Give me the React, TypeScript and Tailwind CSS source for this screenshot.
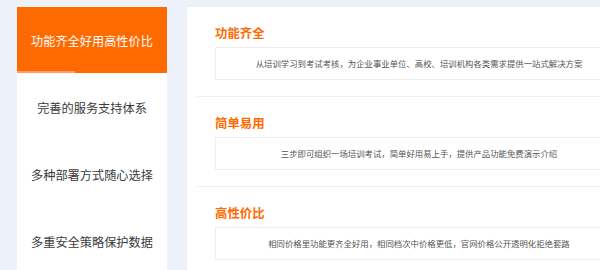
import React from "react";

const tabs = [
  "功能齐全好用高性价比",
  "完善的服务支持体系",
  "多种部署方式随心选择",
  "多重安全策略保护数据",
];

const features = [
  {
    title: "功能齐全",
    desc: "从培训学习到考试考核，为企业事业单位、高校、培训机构各类需求提供一站式解决方案",
  },
  {
    title: "简单易用",
    desc: "三步即可组织一场培训考试，简单好用易上手，提供产品功能免费演示介绍",
  },
  {
    title: "高性价比",
    desc: "相同价格里功能更齐全好用，相同档次中价格更低，官网价格公开透明化拒绝套路",
  },
];

function TabItem({ label, active }: { label: string; active: boolean }) {
  if (active) {
    return (
      <div className="relative h-[66px] bg-[#ff6a00] flex items-center justify-center pt-[3px]">
        <span className="text-[12.2px] text-white">{label}</span>
        <div className="absolute left-0 bottom-0 h-[2px] w-[58px] bg-[#ff9d66]" />
      </div>
    );
  }
  return (
    <div className="h-[67px] flex items-center justify-center pt-[3px]">
      <span className="text-[12.2px] text-[#3a3a3a]">{label}</span>
    </div>
  );
}

function Feature({ title, desc }: { title: string; desc: string }) {
  return (
    <div className="pt-[19px] pb-[16px] pl-[18px] border-b border-[#f0f0f0]">
      <h3 className="text-[12.4px] leading-[14px] font-bold text-[#ff6a00]">{title}</h3>
      <div className="mt-[7px] h-[33px] w-[408px] border border-[#eeeeee] flex items-center justify-center">
        <p className="text-[8.4px] text-[#555]">{desc}</p>
      </div>
    </div>
  );
}

export default function App() {
  return (
    <div
      className="w-[600px] h-[270px] overflow-hidden bg-[#edf1f9] flex gap-[20px] pl-[17px] pt-[7px]"
      style={{ fontFamily: '"Noto Sans CJK SC", "Noto Sans", sans-serif' }}
    >
      <div className="w-[150px] shrink-0 bg-white h-[300px]">
        {tabs.map((t, i) => (
          <TabItem key={t} label={t} active={i === 0} />
        ))}
      </div>
      <div className="w-[474px] shrink-0 bg-white h-[300px] pl-[10px]">
        {features.map((f) => (
          <Feature key={f.title} title={f.title} desc={f.desc} />
        ))}
      </div>
    </div>
  );
}
